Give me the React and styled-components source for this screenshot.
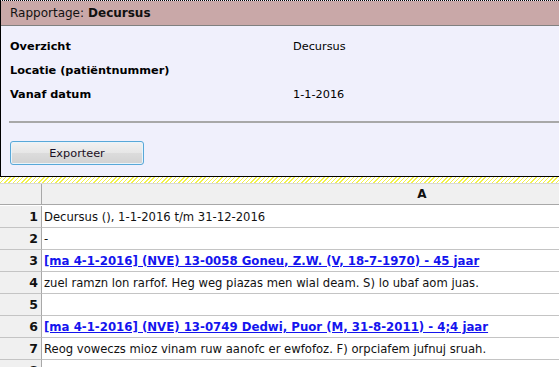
import React from "react";
import styled, { createGlobalStyle } from "styled-components";

const GlobalStyle = createGlobalStyle`
  html, body {
    margin: 0;
    padding: 0;
    overflow: hidden;
  }
  body {
    font-family: "DejaVu Sans", Verdana, sans-serif;
    font-size: 11px;
    color: #000;
    background-color: #fff;
    background-image: repeating-linear-gradient(
      135deg,
      #f2f24a 0,
      #f2f24a 1px,
      #ffffff 1px,
      #ffffff 3px
    );
  }
`;

const Page = styled.div`
  display: flex;
  flex-direction: column;
  gap: 6px;
  width: 820px;
  padding-top: 1px;
`;

const ReportPanel = styled.div`
  width: 558px;
  height: 175px;
  border-left: 1px solid #000;
  border-bottom: 1px solid #000;
  border-top: 1px dotted #000;
  margin-top: -1px;
  background-color: #f0f0fc;
  display: flex;
  flex-direction: column;
`;

const PanelHeader = styled.div`
  height: 24px;
  display: flex;
  align-items: center;
  padding-left: 9px;
  font-size: 12px;
  background-color: #c9a8a8;
  border-bottom: 1px solid #808080;
  color: #111;

  b {
    margin-left: 4px;
  }
`;

const Fields = styled.div`
  display: grid;
  grid-template-columns: 283px 1fr;
  grid-auto-rows: 24px;
  align-items: center;
  padding: 8px 0 0 9px;
  font-size: 11.3px;
`;

const Label = styled.div`
  font-weight: bold;
`;

const Value = styled.div``;

const Divider = styled.div`
  margin: 15px 0 0 8px;
  border-top: 2px solid #a8a8a8;
  height: 0;
`;

const ButtonRow = styled.div`
  padding: 18px 0 0 9px;
`;

const Button = styled.button`
  width: 134px;
  height: 24px;
  font-family: inherit;
  font-size: 11.3px;
  color: #1a0f24;
  border: 1px solid #58a8d8;
  border-radius: 3px;
  background: linear-gradient(#f2f2f2, #e6e6e6 50%, #dcdcdc 50%, #d2d2d2);
  box-shadow: inset 0 0 0 1px #e8f4fb;
  padding: 0;
`;

const Sheet = styled.div`
  display: grid;
  grid-template-columns: 42px 760px;
  grid-auto-rows: 22px;
  background: #fff;
  border-top: 1px solid #d8d8d8;
`;

const Corner = styled.div`
  background: #f0f0f0;
  border-right: 1px solid #a8a8a8;
  border-bottom: 1px solid #a8a8a8;
  height: 20px;
`;

const ColHeader = styled.div`
  background: #f0f0f0;
  border-bottom: 1px solid #a8a8a8;
  height: 20px;
  display: flex;
  align-items: center;
  justify-content: center;
  font-weight: bold;
  font-size: 12px;
  color: #111;
`;

const RowNum = styled.div`
  background: #f0f0f0;
  border-right: 1px solid #a8a8a8;
  border-bottom: 1px solid #c4c4c4;
  display: flex;
  align-items: center;
  justify-content: flex-end;
  padding-right: 3px;
  font-weight: bold;
  font-size: 12.5px;
  color: #111;
`;

const Cell = styled.div`
  border-bottom: 1px solid #c4c4c4;
  display: flex;
  align-items: center;
  padding-left: 2px;
  white-space: nowrap;
  font-size: 11.6px;
  color: #111;
`;

const Link = styled.a`
  color: #1414ee;
  font-weight: bold;
  font-size: 11.75px;
  text-decoration: underline;
  cursor: pointer;
`;

const rows = [
  { text: "Decursus (), 1-1-2016 t/m 31-12-2016" },
  { text: "-" },
  {
    link: "[ma 4-1-2016] (NVE) 13-0058 Goneu, Z.W. (V, 18-7-1970) - 45 jaar",
  },
  {
    text: "zuel ramzn lon rarfof. Heg weg piazas men wial deam. S) lo ubaf aom juas.",
  },
  { text: "" },
  {
    link: "[ma 4-1-2016] (NVE) 13-0749 Dedwi, Puor (M, 31-8-2011) - 4;4 jaar",
  },
  {
    text: "Reog voweczs mioz vinam ruw aanofc er ewfofoz. F) orpciafem jufnuj sruah.",
  },
  { text: "" },
];

export default function App() {
  return (
    <>
      <GlobalStyle />
      <Page>
        <ReportPanel>
          <PanelHeader>
            Rapportage:<b>Decursus</b>
          </PanelHeader>
          <Fields>
            <Label>Overzicht</Label>
            <Value>Decursus</Value>
            <Label>Locatie (patiëntnummer)</Label>
            <Value />
            <Label>Vanaf datum</Label>
            <Value>1-1-2016</Value>
          </Fields>
          <Divider />
          <ButtonRow>
            <Button>Exporteer</Button>
          </ButtonRow>
        </ReportPanel>
        <Sheet>
          <Corner />
          <ColHeader>A</ColHeader>
          {rows.map((row, i) => (
            <React.Fragment key={i}>
              <RowNum>{i + 1}</RowNum>
              <Cell>{row.link ? <Link>{row.link}</Link> : row.text}</Cell>
            </React.Fragment>
          ))}
        </Sheet>
      </Page>
    </>
  );
}
